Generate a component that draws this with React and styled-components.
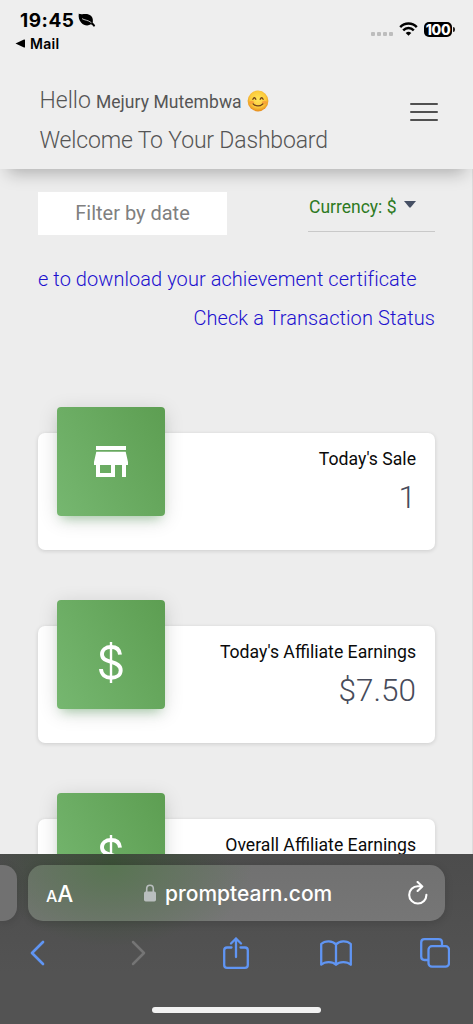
import React from 'react';
import styled, { createGlobalStyle } from 'styled-components';

const GlobalStyle = createGlobalStyle`
  * { box-sizing: border-box; }
  body { margin: 0; background: #ededed; font-family: Roboto, "Liberation Sans", sans-serif; }
`;

const Screen = styled.div`
  width: 473px;
  height: 1024px;
  overflow: hidden;
  display: flex;
  flex-direction: column;
  background: #ededed;
`;

const TopBar = styled.header`
  flex: none;
  height: 169px;
  background: #eee;
  box-shadow: 0 12px 16px -8px rgba(0, 0, 0, 0.27);
  z-index: 1;
`;

const StatusBar = styled.div`
  height: 56px;
  display: flex;
  justify-content: space-between;
  padding: 9px 18px 0 15px;
  font-family: Inter, sans-serif;
  color: #000;
`;

const Clock = styled.div`
  display: flex;
  align-items: center;
  gap: 4px;
  height: 23px;
  padding-left: 5px;
  font-size: 19px;
  line-height: 23px;
  font-weight: 700;
  letter-spacing: 0.5px;
`;

const BackTo = styled.div`
  display: flex;
  align-items: center;
  gap: 5px;
  height: 22px;
  font-size: 14px;
  font-weight: 600;
  letter-spacing: 0.3px;
`;

const Indicators = styled.div`
  display: flex;
  align-items: flex-start;
  padding-top: 13px;
`;

const Signal = styled.div`
  display: flex;
  gap: 2px;
  margin: 10px 6px 0 0;
  i { width: 4px; height: 4px; background: #bdbdbd; border-radius: 1px; }
`;

const Battery = styled.div`
  display: flex;
  align-items: center;
  justify-content: center;
  width: 28px;
  height: 15px;
  margin-left: 6px;
  border-radius: 5px;
  background: #000;
  color: #fff;
  font-size: 14px;
  font-weight: 800;
  letter-spacing: -0.4px;
`;

const BatteryTip = styled.div`
  width: 2px;
  height: 5px;
  margin: 5px 0 0 1px;
  border-radius: 0 2px 2px 0;
  background: #222;
`;

const HeaderRow = styled.div`
  display: flex;
  justify-content: space-between;
  padding: 25px 35.500px 0 39.500px;
`;

const Greeting = styled.div`
  color: #555;
  font-size: 23px;
  font-weight: 300;
  line-height: 40px;
  white-space: nowrap;
`;

const GreetingLine = styled.div`
  display: flex;
  align-items: baseline;
  height: 40px;
  letter-spacing: ${p => p.$spacing || 0}px;
`;

const UserName = styled.span`
  margin: 0 5px 0 5px;
  font-size: 17.5px;
  font-weight: 400;
  letter-spacing: 0.06px;
`;

const MenuButton = styled.button`
  display: flex;
  flex-direction: column;
  justify-content: space-between;
  width: 28px;
  height: 18px;
  margin-top: 22px;
  padding: 0;
  border: 0;
  background: none;
  span { height: 2px; border-radius: 1px; background: #505050; }
`;

const Content = styled.main`
  flex: 1;
  min-height: 0;
  overflow: hidden;
  padding: 23px 37px 0 38px;
  border-right: 1px solid #dcdcdc;
`;

const Filters = styled.div`
  display: flex;
  justify-content: space-between;
`;

const DateFilter = styled.div`
  width: 189px;
  height: 43px;
  background: #fff;
  color: #808080;
  font-size: 20px;
  line-height: 42px;
  text-align: center;
`;

const Currency = styled.div`
  display: flex;
  gap: 7px;
  width: 127px;
  height: 40px;
  border-bottom: 1px solid #c9c9c9;
  color: #2d7a1f;
  font-size: 17.5px;
  line-height: 31px;
  padding-left: 1px;
  white-space: nowrap;
  svg { margin-top: 9px; }
`;

const LinkRow = styled.a`
  display: block;
  height: 39px;
  margin-top: ${p => p.$top || 0}px;
  color: #1c10cf;
  font-size: 20px;
  font-weight: 300;
  line-height: 39px;
  letter-spacing: ${p => p.$spacing || 0}px;
  text-align: ${p => p.$align || 'left'};
  white-space: nowrap;
`;

const Cards = styled.div`
  display: flex;
  flex-direction: column;
  gap: 76px;
  margin-top: 95px;
`;

const Card = styled.section`
  display: flex;
  justify-content: space-between;
  flex: none;
  height: 117px;
  padding: 0 19px;
  border-radius: 7px;
  background: #fff;
  box-shadow: 0 1px 4px rgba(0, 0, 0, 0.14);
`;

const IconTile = styled.div`
  display: flex;
  align-items: center;
  justify-content: center;
  width: 108px;
  height: 109px;
  margin-top: -26px;
  border-radius: 4px;
  background: linear-gradient(60deg, #76b770, #5d9e52);
  box-shadow: 0 4px 20px rgba(0, 0, 0, 0.14), 0 7px 10px -5px rgba(76, 175, 80, 0.4);
`;

const Stat = styled.div`
  text-align: right;
  white-space: nowrap;
`;

const StatLabel = styled.div`
  margin-top: 12px;
  color: #0a0a0a;
  font-size: 17.65px;
  line-height: 28px;
`;

const StatValue = styled.div`
  color: #474b5a;
  font-size: 31.5px;
  font-weight: 300;
  line-height: 40px;
  margin-top: 5px;
`;

const BrowserBar = styled.footer`
  flex: none;
  display: flex;
  flex-direction: column;
  height: 170px;
  background:
    radial-gradient(ellipse 120px 85px at 112px 8px, rgba(54, 80, 48, 0.75), rgba(70, 90, 66, 0) 100%),
    linear-gradient(#4c4c4c, #535353 70%);
`;

const AddressRow = styled.div`
  display: flex;
  gap: 11px;
  padding-top: 11px;
`;

const PreviousTab = styled.div`
  width: 17px;
  height: 56px;
  border-radius: 0 14px 14px 0;
  background: #717171;
  box-shadow: 0 2px 9px rgba(0, 0, 0, 0.12);
`;

const AddressBar = styled.div`
  display: flex;
  align-items: center;
  width: 417px;
  height: 56px;
  padding: 0 17px 0 18px;
  border-radius: 15px;
  background:
    radial-gradient(ellipse 140px 90px at 84px 2px, #597553, rgba(108, 117, 107, 0) 100%),
    linear-gradient(#717171, #767676);
  box-shadow: 0 2px 9px rgba(0, 0, 0, 0.14);
  color: #fff;
  font-family: Inter, sans-serif;
`;

const TextSize = styled.div`
  width: 98px;
  padding-top: 1px;
  font-size: 22.5px;
  font-weight: 500;
  small { font-size: 16px; }
`;

const Domain = styled.div`
  flex: 1;
  margin-left: 9px;
  padding-top: 1px;
  font-size: 21px;
  font-weight: 550;
  line-height: 54px;
`;

const Toolbar = styled.nav`
  display: grid;
  grid-template-columns: repeat(5, 99.4px);
  place-items: center;
  height: 64px;
  margin-left: -12px;
`;

const HomeIndicator = styled.div`
  width: 169px;
  height: 6px;
  margin: 22px 0 0 152px;
  border-radius: 3px;
  background: #f2f2f2;
`;

const LeafIcon = () => (
  <svg width="18" height="15" viewBox="0 0 18 15">
    <path d="M.8.4C3 2 7.5.3 11.200 1.700 14 2.800 15 5.300 14.900 8L14.700 9.700C16 10.700 17 11.700 17.200 13L15.700 13.700C15 12.500 14 11.700 13 11.300 10 13.200 5.800 12.600 3.300 9.800 1 7.400.2 3.600.8.400Z" />
    <path d="M4 5.600C6.500 7.400 9.700 6.700 13.400 9.700" fill="none" stroke="#eee" strokeWidth="0.8" />
  </svg>
);

const WifiIcon = () => (
  <svg width="19" height="14" viewBox="0 0 19 14" fill="none" stroke="#000" strokeWidth="2.500">
    <path d="M1.200 5.100C5.800.4 13.200.4 17.800 5.100" />
    <path d="M4.200 8.300C7.200 5.300 11.800 5.300 14.800 8.300" />
    <path d="M9.500 13.700L6.700 10.900Q9.500 8.600 12.300 10.900Z" fill="#000" stroke="none" />
  </svg>
);

const FaceSvg = styled.svg`
  align-self: flex-start;
  margin-top: 9px;
`;

const SmileIcon = () => (
  <FaceSvg width="22" height="22" viewBox="0 0 22 22">
    <defs>
      <radialGradient id="face" cx="50%" cy="42%" r="58%">
        <stop offset="0" stopColor="#ffe65a" />
        <stop offset=".65" stopColor="#fccb3c" />
        <stop offset="1" stopColor="#e68a1c" />
      </radialGradient>
    </defs>
    <circle cx="11" cy="11" r="10.400" fill="url(#face)" />
    <ellipse cx="4.600" cy="12.500" rx="2.500" ry="1.800" fill="#f58a35" opacity=".6" />
    <ellipse cx="17.400" cy="12.500" rx="2.500" ry="1.800" fill="#f58a35" opacity=".6" />
    <g fill="none" stroke="#70401a" strokeWidth="1.300" strokeLinecap="round">
      <path d="M5.900 9.300Q7.400 6.200 8.800 9.300M13.200 9.300Q14.600 6.200 16.100 9.300" />
      <path d="M6.200 13.900Q11 18 15.800 13.900" />
    </g>
  </FaceSvg>
);

const StoreIcon = () => (
  <svg width="34" height="31" viewBox="0 0 34 31" fill="#fff">
    <path d="M2 0h30v4H2zM2.300 5.700h29.400L34 16v3h-2v12h-4V19h-7v12H2V19H0v-3zM6 19v8h11v-8z" fillRule="evenodd" />
  </svg>
);

const DollarSvg = styled.svg`
  margin-top: 15px;
`;

const DollarIcon = () => (
  <DollarSvg width="24" height="41" viewBox="0 0 24 41" fill="none" stroke="#fff">
    <path d="M21 12.700C20.600 7.700 17.200 5 12 5S3 7.800 3 12.200c0 5.200 4.200 6.300 9.200 7.700 5.400 1.500 9.500 3.200 9.500 8.300 0 4.700-4 7.500-9.500 7.500-6 0-9.900-3.200-10.200-8.700" strokeWidth="3.900" />
    <path d="M12 0v41" strokeWidth="2.400" />
  </DollarSvg>
);

const LockIcon = () => (
  <svg width="12" height="18" viewBox="0 0 12 18">
    <path d="M2.700 8V4.700C2.700 0 9.300 0 9.300 4.700V8" fill="none" stroke="#b9bebe" strokeWidth="1.600" />
    <rect y="7.500" width="12" height="10" rx="1.700" fill="#b9bebe" />
  </svg>
);

const ReloadIcon = () => (
  <svg width="20" height="25" viewBox="0 0 20 25" fill="none" stroke="#fff" strokeWidth="2.100" strokeLinecap="round" strokeLinejoin="round">
    <path d="M18.400 13.800A8.600 8.600 0 1 1 9.800 5.300H14M9.600 1L14.300 5.400L9.600 10" />
  </svg>
);

const ToolIcon = ({ w, h, color = '#6095f3', strokeWidth = 2.3, children }) => (
  <svg width={w} height={h} viewBox={`0 0 ${w} ${h}`} fill="none" stroke={color} strokeWidth={strokeWidth} strokeLinecap="round" strokeLinejoin="round">
    {children}
  </svg>
);

const stats = [
  { label: "Today's Sale", value: '1', icon: <StoreIcon /> },
  { label: "Today's Affiliate Earnings", value: '$7.50', icon: <DollarIcon /> },
  { label: 'Overall Affiliate Earnings', value: '', icon: <DollarIcon /> },
];

export default function App() {
  return (
    <Screen>
      <GlobalStyle />
      <TopBar>
        <StatusBar>
          <div>
            <Clock>19:45 <LeafIcon /></Clock>
            <BackTo>
              <svg width="10" height="9" viewBox="0 0 10 9"><path d="M.5 4.500L9 .5Q10 .2 10 1V8Q10 8.800 9 8.500Z" /></svg>
              Mail
            </BackTo>
          </div>
          <Indicators>
            <Signal><i /><i /><i /><i /></Signal>
            <WifiIcon />
            <Battery>100</Battery>
            <BatteryTip />
          </Indicators>
        </StatusBar>
        <HeaderRow>
          <Greeting>
            <GreetingLine>Hello <UserName>Mejury Mutembwa</UserName><SmileIcon /></GreetingLine>
            <GreetingLine $spacing={-0.17}>Welcome To Your Dashboard</GreetingLine>
          </Greeting>
          <MenuButton aria-label="Menu"><span /><span /><span /></MenuButton>
        </HeaderRow>
      </TopBar>
      <Content>
        <Filters>
          <DateFilter>Filter by date</DateFilter>
          <Currency>
            Currency: $
            <svg width="12" height="7" viewBox="0 0 12 7" fill="#465064"><path d="M0 0H12L6.800 6.300Q6 7 5.200 6.300Z" /></svg>
          </Currency>
        </Filters>
        <LinkRow $top={25} $spacing={0.06}>e to download your achievement certificate</LinkRow>
        <LinkRow $align="right" $spacing={0.08}>Check a Transaction Status</LinkRow>
        <Cards>
          {stats.map(s => (
            <Card key={s.label}>
              <IconTile>{s.icon}</IconTile>
              <Stat>
                <StatLabel>{s.label}</StatLabel>
                <StatValue>{s.value}</StatValue>
              </Stat>
            </Card>
          ))}
        </Cards>
      </Content>
      <BrowserBar>
        <AddressRow>
          <PreviousTab />
          <AddressBar>
            <TextSize><small>A</small>A</TextSize>
            <LockIcon />
            <Domain>promptearn.com</Domain>
            <ReloadIcon />
          </AddressBar>
        </AddressRow>
        <Toolbar>
          <ToolIcon w={18} h={26} strokeWidth={2.7}><path d="M14 2L3 13L14 24" /></ToolIcon>
          <ToolIcon w={18} h={26} color="#757575" strokeWidth={2.5}><path d="M5 2L16 13L5 24" /></ToolIcon>
          <ToolIcon w={26} h={32}><path d="M8.500 10.500H4Q1.200 10.500 1.200 13.300V28Q1.200 30.800 4 30.800H22Q24.800 30.800 24.800 28V13.300Q24.800 10.500 22 10.500H17.500M13 20V1.500M8 6.500L13 1.500L18 6.500" /></ToolIcon>
          <ToolIcon w={32} h={26}><path d="M16 4.500C12.500.3 5 .3 1.200 4V24.700C5 21.200 12.500 21.200 16 24.800C19.500 21.200 27 21.200 30.800 24.700V4C27 .3 19.500.3 16 4.500ZV24.800" /></ToolIcon>
          <ToolIcon w={30} h={30}><path d="M8 22H4.500Q1.200 22 1.200 18.500V4.500Q1.200 1.200 4.500 1.200H18.500Q22 1.200 22 4.500V8" /><rect x="8.500" y="8.200" width="20.500" height="20.500" rx="3.500" /></ToolIcon>
        </Toolbar>
        <HomeIndicator />
      </BrowserBar>
    </Screen>
  );
}
